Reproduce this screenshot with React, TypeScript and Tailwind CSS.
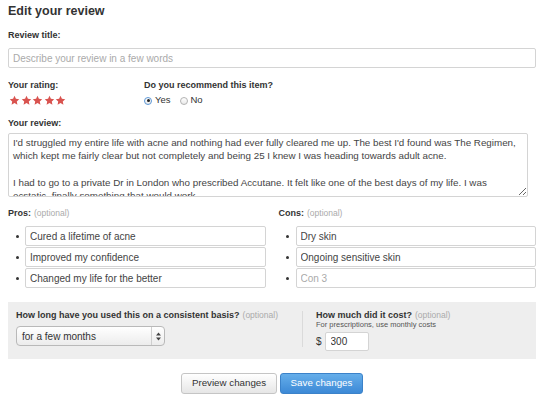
import React from 'react';

const Star = () => (
  <svg width="11" height="11" viewBox="0 0 24 24" className="text-[#d9534f]">
    <path
      fill="currentColor"
      d="M12 1.5l3.1 6.6 7.2.9-5.3 5 1.4 7.1L12 17.6l-6.4 3.5L7 14l-5.3-5 7.2-.9L12 1.5z"
    />
  </svg>
);

const Radio = ({ checked, label }: { checked?: boolean; label: string }) => (
  <label className="flex items-center gap-[3px] text-[9.5px] text-[#333]">
    <span
      className={`flex h-[8px] w-[8px] items-center justify-center rounded-full border bg-gradient-to-b from-white to-[#e9e9e9] ${
        checked ? 'border-[#5d97d6]' : 'border-[#b3b3b3]'
      }`}
    >
      {checked && <span className="h-[3px] w-[3px] rounded-full bg-[#222]" />}
    </span>
    {label}
  </label>
);

const Label = ({ text, optional }: { text: string; optional?: boolean }) => (
  <div className="text-[9px] font-bold leading-[11px] text-[#333]">
    {text}
    {optional && <span className="ml-[3px] text-[8.5px] font-normal text-[#aaa]">(optional)</span>}
  </div>
);

const ListInput = ({ value, placeholder }: { value?: string; placeholder?: string }) => (
  <div className="flex items-center">
    <span className="flex w-[17px] justify-center pl-[1px]">
      <span className="h-[3px] w-[3px] rounded-full bg-[#333]" />
    </span>
    <input
      className="h-[20px] flex-1 rounded-[2px] border border-[#d4d4d4] px-[4px] text-[10px] text-[#444] placeholder:text-[#aaa] outline-none"
      defaultValue={value}
      placeholder={placeholder}
    />
  </div>
);

const review =
  "I'd struggled my entire life with acne and nothing had ever fully cleared me up. The best I'd found was The Regimen, which kept me fairly clear but not completely and being 25 I knew I was heading towards adult acne.\n\nI had to go to a private Dr in London who prescribed Accutane. It felt like one of the best days of my life. I was ecstatic, finally something that would work.";

export default function App() {
  const pros = ['Cured a lifetime of acne', 'Improved my confidence', 'Changed my life for the better'];
  const cons = ['Dry skin', 'Ongoing sensitive skin'];

  return (
    <div
      className="h-[400px] w-[542px] overflow-hidden bg-white px-[8px] pt-[3px]"
      style={{ fontFamily: '"Liberation Sans", Arial, sans-serif' }}
    >
      <h1 className="text-[12.5px] font-bold leading-[16px] text-[#333]">Edit your review</h1>

      <div className="mt-[11px]">
        <Label text="Review title:" />
      </div>
      <input
        className="mt-[7px] block h-[20px] w-[528px] rounded-[2px] border border-[#d4d4d4] px-[4px] text-[10px] text-[#444] placeholder:text-[#aaa] outline-none"
        placeholder="Describe your review in a few words"
      />

      <div className="mt-[12px] flex">
        <div className="w-[136px]">
          <Label text="Your rating:" />
          <div className="mt-[4px] flex h-[11px] items-center gap-[0.5px] pl-[1px]">
            <Star />
            <Star />
            <Star />
            <Star />
            <Star />
          </div>
        </div>
        <div>
          <Label text="Do you recommend this item?" />
          <div className="mt-[4px] flex h-[11px] items-center gap-[9px]">
            <Radio checked label="Yes" />
            <Radio label="No" />
          </div>
        </div>
      </div>

      <div className="mt-[12px]">
        <Label text="Your review:" />
      </div>
      <textarea
        className="mt-[4px] block h-[64px] w-[520px] overflow-hidden rounded-[2px] border border-[#d4d4d4] pl-[4px] pr-[6px] pt-[2px] text-[9.8px] leading-[13.3px] text-[#444] outline-none"
        defaultValue={review}
      />

      <div className="mt-[11px] grid w-[528px] grid-cols-2 gap-x-[13px]">
        <div>
          <Label text="Pros:" optional />
          <div className="mt-[7px] flex flex-col gap-[1px]">
            {pros.map((p) => (
              <ListInput key={p} value={p} />
            ))}
          </div>
        </div>
        <div>
          <Label text="Cons:" optional />
          <div className="mt-[7px] flex flex-col gap-[1px]">
            {cons.map((c) => (
              <ListInput key={c} value={c} />
            ))}
            <ListInput placeholder="Con 3" />
          </div>
        </div>
      </div>

      <div className="mt-[14px] flex h-[57px] w-[528px] bg-[#eeeeee] px-[8px] pt-[8px]">
        <div className="w-[286px]">
          <Label text="How long have you used this on a consistent basis?" optional />
          <div className="mt-[5px] flex h-[20px] w-[149px] items-center rounded-[4px] border border-[#b9b9b9] bg-gradient-to-b from-white to-[#ececec] text-[10px] text-[#333]">
            <span className="flex-1 pl-[5px]">for a few months</span>
            <span className="flex h-full w-[13px] items-center justify-center border-l border-[#cfcfcf]">
              <svg width="5" height="9" viewBox="0 0 5 9">
                <path d="M2.5 0.5L5 3.5H0z M2.5 8.5L5 5.5H0z" fill="#444" />
              </svg>
            </span>
          </div>
        </div>
        <div className="mb-[12px] mt-[1px] w-px bg-[#dadada]" />
        <div className="pl-[13px]">
          <Label text="How much did it cost?" optional />
          <div className="-mt-[1px] text-[7.5px] leading-[9px] text-[#555]">For prescriptions, use monthly costs</div>
          <div className="mt-[3px] flex items-center gap-[3px]">
            <span className="text-[10px] text-[#333]">$</span>
            <input
              className="h-[19px] w-[44px] rounded-[2px] border border-[#d4d4d4] bg-white px-[5px] text-[10px] text-[#333] outline-none"
              defaultValue="300"
            />
          </div>
        </div>
      </div>

      <div className="mt-[14px] flex w-[528px] justify-center gap-[3px]">
        <button className="h-[21px] w-[96px] rounded-[3px] border border-[#c5c5c5] bg-gradient-to-b from-white to-[#e6e6e6] text-[9.75px] text-[#333]">
          Preview changes
        </button>
        <button className="h-[21px] w-[83px] rounded-[3px] border border-[#3b82c9] bg-gradient-to-b from-[#65aeea] to-[#3c89d6] text-[9.75px] text-white">
          Save changes
        </button>
      </div>
    </div>
  );
}
